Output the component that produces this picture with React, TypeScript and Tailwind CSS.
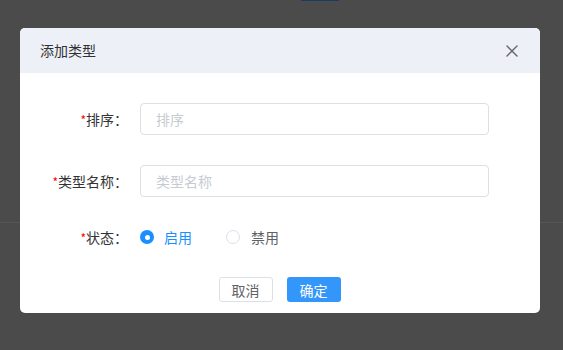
import React from "react";

const font = { fontFamily: '"Noto Sans CJK SC", "Noto Sans", sans-serif' };

function Label({ text }: { text: string }) {
  return (
    <div className="w-[120px] shrink-0 text-right text-[14px] leading-[20px] text-[#333333] pr-[12px]">
      <span className="text-[#ff0000] text-[12px]">*</span>
      {text}：
    </div>
  );
}

function Field({ label, placeholder }: { label: string; placeholder: string }) {
  return (
    <div className="flex items-center h-[32px]">
      <Label text={label} />
      <input
        placeholder={placeholder}
        className="w-[349px] h-[32px] border border-[#dcdfe6] rounded-[4px] px-[15px] text-[14px] text-[#606266] placeholder:text-[#c8cad2] outline-none"
      />
    </div>
  );
}

export default function App() {
  return (
    <div className="relative w-[563px] h-[350px] overflow-hidden bg-[#4b4b4b]" style={font}>
      <div className="flex flex-col h-full">
        <div className="flex h-[1px]">
          <div className="w-[301px]" />
          <div className="w-[38px] bg-[#1b3a6a]" />
        </div>
        <div className="h-[221px]" />
        <div className="border-t border-[#565656]" />
      </div>

      <div className="absolute left-[20px] top-[28px] w-[520px] h-[285px] bg-white rounded-[5px] overflow-hidden flex flex-col">
        <div className="h-[45px] bg-[#edf0f7] flex items-center justify-between pl-[20px] pr-[22px]">
          <span className="text-[14px] text-[#303133]">添加类型</span>
          <svg width="12" height="12" viewBox="0 0 12 12">
            <path d="M1 1 L11 11 M11 1 L1 11" stroke="#666" strokeWidth="1.4" strokeLinecap="round" />
          </svg>
        </div>
        <div className="flex flex-col pt-[30px]">
          <Field label="排序" placeholder="排序" />
          <div className="h-[30px]" />
          <Field label="类型名称" placeholder="类型名称" />
          <div className="h-[30px]" />
          <div className="flex items-center h-[20px]">
            <Label text="状态" />
            <div className="flex items-center">
              <span className="w-[14px] h-[14px] rounded-full bg-[#1890ff] flex items-center justify-center">
                <span className="w-[5px] h-[5px] rounded-full bg-white" />
              </span>
              <span className="ml-[10px] text-[14px] text-[#1890ff]">启用</span>
              <span className="ml-[34px] w-[14px] h-[14px] rounded-full border border-[#dcdfe6] bg-white" />
              <span className="ml-[11px] text-[14px] text-[#606266]">禁用</span>
            </div>
          </div>
          <div className="h-[30px]" />
          <div className="flex justify-center gap-[14px] pr-[1px]">
            <button className="w-[54px] h-[25px] border border-[#dcdfe6] rounded-[3px] bg-white text-[14px] text-[#606266] leading-none">
              取消
            </button>
            <button className="w-[54px] h-[25px] rounded-[3px] bg-[#3396fa] text-[14px] text-white leading-none">
              确定
            </button>
          </div>
        </div>
      </div>
    </div>
  );
}
